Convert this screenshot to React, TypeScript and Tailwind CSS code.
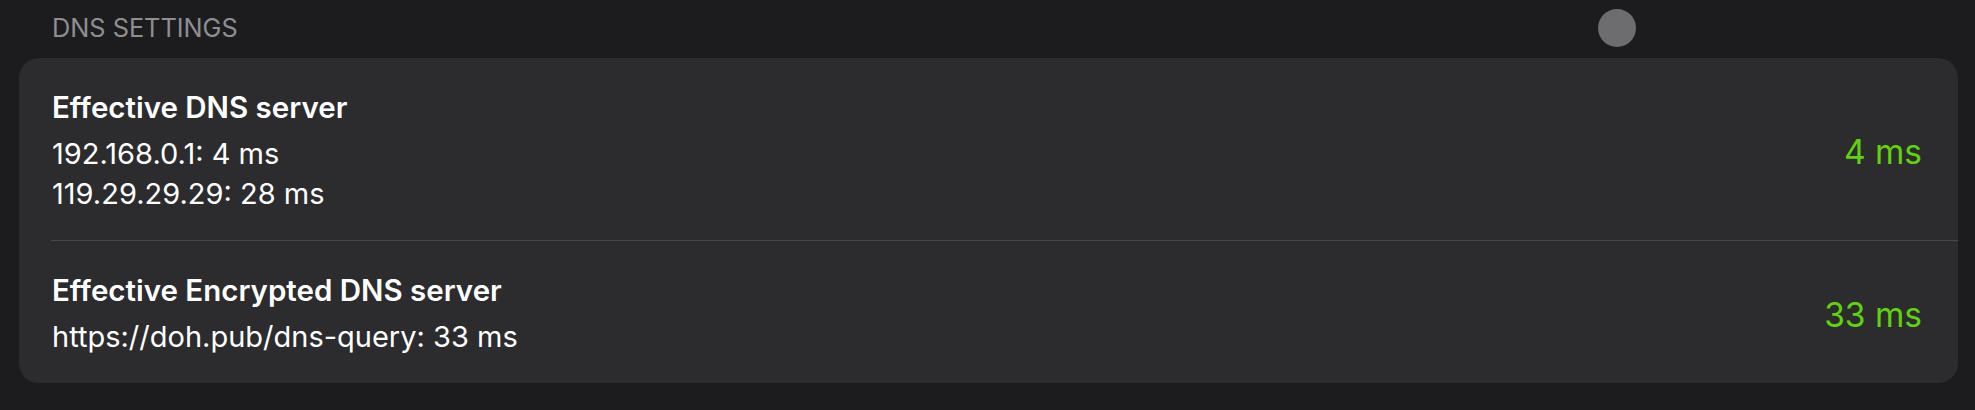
import React from 'react';

const rows = [
  {
    title: 'Effective DNS server',
    lines: ['192.168.0.1: 4 ms', '119.29.29.29: 28 ms'],
    value: '4 ms',
  },
  {
    title: 'Effective Encrypted DNS server',
    lines: ['https://doh.pub/dns-query: 33 ms'],
    value: '33 ms',
  },
];

export default function App() {
  return (
    <div
      className="relative w-[1975px] h-[410px] bg-[#1c1c1e] pl-[19px] pr-[17px] overflow-hidden"
      style={{ fontFamily: 'Inter, "Noto Sans", "Liberation Sans", sans-serif' }}
    >
      {/* Header */}
      <div className="pt-[12px] pl-[33px] text-[25.3px] leading-[32px] text-[#8e8e93]">
        DNS SETTINGS
      </div>

      {/* Scroll handle overlay */}
      <div className="absolute left-[1598px] top-[9px] w-[38px] h-[38px] rounded-full bg-[#6d6d70]" />

      {/* Card */}
      <div className="mt-[14px] bg-[#2c2c2e] rounded-[20px] overflow-hidden">
        {rows.map((row, i) => (
          <div key={i} className="pl-[32px]">
            <div
              className={
                'flex items-center pr-[36px] pt-[32px] pb-[26px] ' +
                (i < rows.length - 1 ? 'border-b border-[#48484a]' : '')
              }
            >
              <div className="flex-1 flex flex-col gap-[10px] pl-[1px]">
                <div className="text-[29.5px] leading-[34px] font-semibold text-white">{row.title}</div>
                <div className="flex flex-col">
                  {row.lines.map((l) => (
                    <div key={l} className="text-[29px] leading-[40px] text-white">
                      {l}
                    </div>
                  ))}
                </div>
              </div>
              <div className="text-[33.5px] leading-[40px] text-[#5fd30b]">{row.value}</div>
            </div>
          </div>
        ))}
      </div>
    </div>
  );
}
